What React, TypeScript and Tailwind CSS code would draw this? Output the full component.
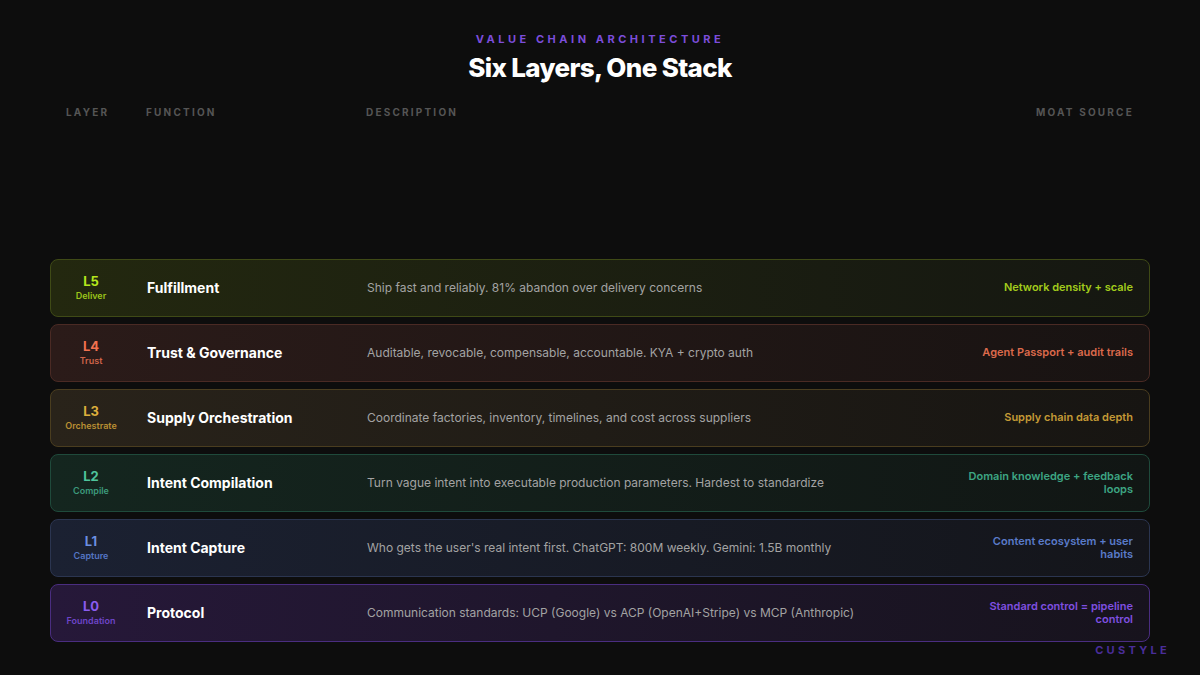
const rows = [
  { l: "L5", sub: "Deliver", fn: "Fulfillment", desc: "Ship fast and reliably. 81% abandon over delivery concerns", moat: "Network density + scale", c: "text-[#b5e61d]", sc: "text-[#9bc41a]", bg: "bg-gradient-to-r from-[#23280f] to-[#151711]", b: "border-[#3f4a16]", m: "text-[#a3cc1c]" },
  { l: "L4", sub: "Trust", fn: "Trust & Governance", desc: "Auditable, revocable, compensable, accountable. KYA + crypto auth", moat: "Agent Passport + audit trails", c: "text-[#f2714f]", sc: "text-[#d0644a]", bg: "bg-gradient-to-r from-[#2b1b19] to-[#181312]", b: "border-[#4a2a24]", m: "text-[#dc6a4c]" },
  { l: "L3", sub: "Orchestrate", fn: "Supply Orchestration", desc: "Coordinate factories, inventory, timelines, and cost across suppliers", moat: "Supply chain data depth", c: "text-[#dcae3c]", sc: "text-[#b98f33]", bg: "bg-gradient-to-r from-[#29231a] to-[#171512]", b: "border-[#4a3d1f]", m: "text-[#c49a36]" },
  { l: "L2", sub: "Compile", fn: "Intent Compilation", desc: "Turn vague intent into executable production parameters. Hardest to standardize", moat: "Domain knowledge + feedback loops", c: "text-[#4fc49c]", sc: "text-[#3c9a7b]", bg: "bg-gradient-to-r from-[#14261f] to-[#111614]", b: "border-[#1f4a3b]", m: "text-[#3da583]" },
  { l: "L1", sub: "Capture", fn: "Intent Capture", desc: "Who gets the user's real intent first. ChatGPT: 800M weekly. Gemini: 1.5B monthly", moat: "Content ecosystem + user habits", c: "text-[#6b8fe0]", sc: "text-[#5475c4]", bg: "bg-gradient-to-r from-[#1b2132] to-[#14151a]", b: "border-[#2b3550]", m: "text-[#5a7bc9]" },
  { l: "L0", sub: "Foundation", fn: "Protocol", desc: "Communication standards: UCP (Google) vs ACP (OpenAI+Stripe) vs MCP (Anthropic)", moat: "Standard control = pipeline control", c: "text-[#8b5cf0]", sc: "text-[#6d45c8]", bg: "bg-gradient-to-r from-[#261839] to-[#17131d]", b: "border-[#4a2d80]", m: "text-[#7f4fe0]" },
];

export default function App() {
  return (
    <div className="relative w-[1200px] h-[675px] bg-[#0d0d0d] overflow-hidden font-[Inter,Roboto,sans-serif] px-[50px] pt-[31px]">
      <div className="text-center text-[11px] font-bold tracking-[0.32em] text-[#7c4ddb]">VALUE CHAIN ARCHITECTURE</div>
      <h1 className="text-center text-[26px] font-extrabold text-white tracking-tight mt-[2px] leading-[36px]">Six Layers, One Stack</h1>
      <div className="flex items-center mt-[19px] text-[10px] font-bold tracking-[0.22em] text-[#555]">
        <div className="w-[96px] pl-[16px]">LAYER</div>
        <div className="w-[220px]">FUNCTION</div>
        <div className="flex-1">DESCRIPTION</div>
        <div className="pr-[16px]">MOAT SOURCE</div>
      </div>
      <div className="flex flex-col gap-[7px] mt-[139px]">
        {rows.map((r) => (
          <div key={r.l} className={`flex items-center h-[58px] rounded-lg border ${r.b} ${r.bg}`}>
            <div className="w-[80px] flex flex-col items-center">
              <div className={`text-[13px] font-bold leading-4 ${r.c}`}>{r.l}</div>
              <div className={`text-[9px] font-semibold leading-3 mt-[1px] ${r.sc}`}>{r.sub}</div>
            </div>
            <div className="w-[16px]" />
            <div className="w-[220px] text-[14px] font-bold text-white">{r.fn}</div>
            <div className="flex-1 text-[12px] text-[#a3a3a3]">{r.desc}</div>
            <div className={`w-[190px] text-right pr-[16px] text-[11px] font-semibold leading-[13px] ${r.m}`}>{r.moat}</div>
          </div>
        ))}
      </div>
      <div className="absolute right-[30px] top-[642px] text-[11px] font-bold tracking-[0.3em] text-[#4a2d9a]">CUSTYLE</div>
    </div>
  );
}
